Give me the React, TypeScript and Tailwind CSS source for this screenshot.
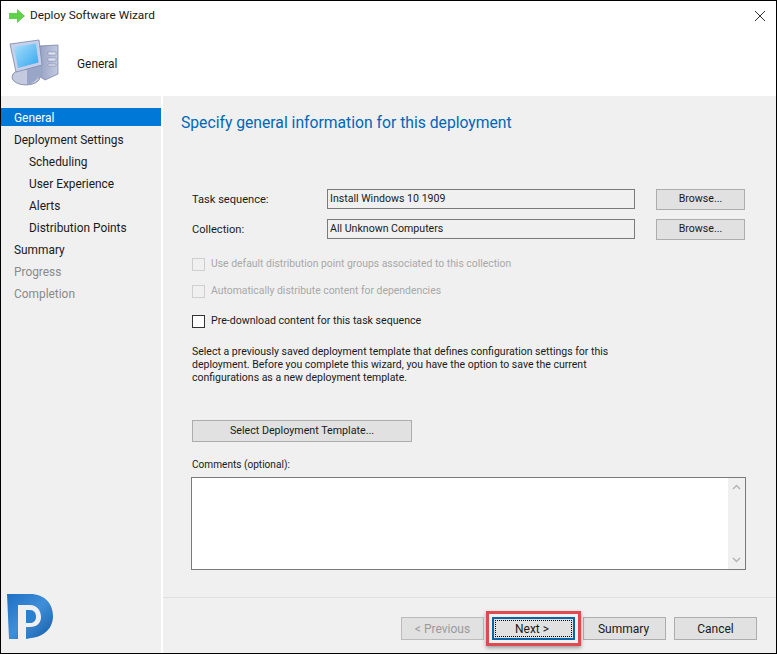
import React from "react";

const font = "font-['Roboto','Noto_Sans',sans-serif]";

function Btn({ children, className = "" }: { children: React.ReactNode; className?: string }) {
  return (
    <div className={`flex items-center justify-center border border-[#adadad] bg-[#e1e1e1] text-[#1a1a1a] ${className}`}>
      {children}
    </div>
  );
}

function Check({ label, disabled, className = "" }: { label: string; disabled?: boolean; className?: string }) {
  return (
    <div className={`flex h-[16px] items-center gap-[6px] ${disabled ? "text-[10.4px] text-[#a8a8a8]" : "text-[10.6px] text-[#1a1a1a]"} ${className}`}>
      <span className={`h-[13px] w-[13px] border ${disabled ? "border-[#cfcfcf] bg-[#f0f0f0]" : "border-[#333] bg-white"}`} />
      <span>{label}</span>
    </div>
  );
}

function Field({ label, value, className = "" }: { label: string; value: string; className?: string }) {
  return (
    <div className={`flex h-[22px] items-center ${className}`}>
      <span className="w-[135px] pt-[2px] text-[11.1px] text-[#1a1a1a]">{label}</span>
      <div className="flex h-[20px] w-[308px] items-center border border-[#7a7a7a] bg-[#f0f0f0] pl-[2px] text-[10.6px] text-[#1a1a1a]">{value}</div>
      <Btn className="ml-[21px] h-[21px] w-[89px] text-[10.6px]">Browse...</Btn>
    </div>
  );
}

function NavItem({ label, sub, active, muted }: { label: string; sub?: boolean; active?: boolean; muted?: boolean }) {
  return (
    <div
      className={`flex h-[18px] items-center pt-[3px] ${sub ? "pl-[28px]" : "pl-[13px]"} ${
        active ? "bg-[#0078d7] text-white" : muted ? "text-[#8a8a8a]" : "text-[#1a1a1a]"
      } mb-[4px] text-[11.9px]`}
    >
      {label}
    </div>
  );
}

function MonitorIcon() {
  return (
    <svg width="50" height="50" viewBox="0 0 50 50">
      <defs>
        <linearGradient id="scr" x1="0" y1="0" x2="1" y2="1">
          <stop offset="0" stopColor="#a8e0fb" />
          <stop offset="1" stopColor="#35a5ee" />
        </linearGradient>
        <linearGradient id="case" x1="0" y1="0" x2="1" y2="0">
          <stop offset="0" stopColor="#8f9cc0" />
          <stop offset="1" stopColor="#c3cae0" />
        </linearGradient>
      </defs>
      <path d="M30 8 L49 7 L49 36 L36 42 L27 36 Z" fill="url(#case)" stroke="#6d7aa0" strokeWidth="0.7" />
      <path d="M39 14h8v3h-8zM39 20h8v3h-8zM39 26h8v2h-8z" fill="#dfe3ef" stroke="#7783a6" strokeWidth="0.5" />
      <ellipse cx="17" cy="39" rx="14" ry="8" fill="#c4cbe0" stroke="#6b7696" strokeWidth="0.7" />
      <path d="M18 28 L33 27 L34 36 L22 46 L18 46 Z" fill="#9aa6c8" />
      <path d="M1 6 L30 2 L33 27 L7 34 Z" fill="#c6d0ea" stroke="#7b88ab" strokeWidth="0.8" />
      <path d="M5 9 L27 5.5 L29.5 24.5 L9 30 Z" fill="url(#scr)" />
    </svg>
  );
}

function Logo() {
  return (
    <svg className="absolute bottom-[12px] left-[4px]" width="50" height="48" viewBox="0 0 50 48">
      <defs>
        <linearGradient id="lg" x1="0" y1="0" x2="1" y2="1">
          <stop offset="0" stopColor="#1f6fc4" />
          <stop offset="0.5" stopColor="#3f8fd8" />
          <stop offset="1" stopColor="#165ca8" />
        </linearGradient>
      </defs>
      <path
        d="M2 1 H25 C40 1 48 11 48 23 C48 36 38 44 26 45 L21 46 V34 H25 C32 34 36 30 36 24 C36 18 32 12 25 12 H13 V46 H4 Z"
        fill="url(#lg)"
      />
      <path d="M21 17 H25 C29 17 31 20 31 24 C31 28 28 30 25 30 H21 Z" fill="#2b7fcc" />
    </svg>
  );
}

export default function App() {
  return (
    <div className={`relative flex h-[654px] w-[777px] flex-col border border-black bg-white ${font}`}>
      <div className="flex h-[29px] items-center pl-[8px] pt-[1px]">
        <svg width="17" height="14" viewBox="0 0 17 14">
          <path d="M0 4 H8 V0 L16 7 L8 14 V10 H0 Z" fill="#5ed04a" />
        </svg>
        <span className="ml-[4px] text-[11.8px] text-[#1a1a1a]">Deploy Software Wizard</span>
        <svg className="ml-auto mr-[10px]" width="12" height="12" viewBox="0 0 12 12">
          <path d="M1 1 L11 11 M11 1 L1 11" stroke="#333" strokeWidth="1" fill="none" />
        </svg>
      </div>

      <div className="flex h-[66px] items-center pl-[8px]">
        <MonitorIcon />
        <span className="ml-[18px] mt-[4px] text-[11.9px] text-[#1a1a1a]">General</span>
      </div>

      <div className="flex min-h-0 flex-1">
        <div className="w-[160px] bg-[#f0f0f0] pt-[12px]">
          <NavItem label="General" active />
          <NavItem label="Deployment Settings" />
          <NavItem label="Scheduling" sub />
          <NavItem label="User Experience" sub />
          <NavItem label="Alerts" sub />
          <NavItem label="Distribution Points" sub />
          <NavItem label="Summary" />
          <NavItem label="Progress" muted />
          <NavItem label="Completion" muted />
        </div>
        <div className="flex flex-1 flex-col border-l-2 border-white bg-[#f0f0f0]">
          <div className="flex-1 pl-[18px]">
            <h1 className="mt-[15px] text-[15.7px] leading-[24px] text-[#0067b8]">Specify general information for this deployment</h1>
            <Field label="Task sequence:" value="Install Windows 10 1909" className="mt-[53px] pl-[11px]" />
            <Field label="Collection:" value="All Unknown Computers" className="mt-[8px] pl-[11px]" />
            <Check label="Use default distribution point groups associated to this collection" disabled className="ml-[11px] mt-[16px]" />
            <Check label="Automatically distribute content for dependencies" disabled className="ml-[11px] mt-[11px]" />
            <Check label="Pre-download content for this task sequence" className="ml-[11px] mt-[14px]" />
            <p className="ml-[11px] mt-[16px] w-[425px] text-[10.5px] leading-[13px] text-[#1a1a1a]">
              Select a previously saved deployment template that defines configuration settings for this deployment. Before you complete this wizard, you have the option to save the current configurations as a new deployment template.
            </p>
            <Btn className="ml-[11px] mt-[35.5px] h-[22px] w-[220px] pt-[2px] text-[10.7px]">Select Deployment Template...</Btn>
            <div className="ml-[11px] mt-[15px] h-[16px] text-[10.1px] leading-[16px] text-[#1a1a1a]">Comments (optional):</div>
            <div className="ml-[10px] mt-[4px] flex h-[93px] w-[555px] justify-end border border-[#7a7a7a] bg-white">
              <div className="flex w-[17px] flex-col items-center justify-between bg-[#f0f0f0] py-[6px]">
                <svg width="9" height="6" viewBox="0 0 9 6"><path d="M1 5 L4.5 1.5 L8 5" stroke="#b5b5b5" strokeWidth="1.5" fill="none" /></svg>
                <svg width="9" height="6" viewBox="0 0 9 6"><path d="M1 1 L4.5 4.5 L8 1" stroke="#b5b5b5" strokeWidth="1.5" fill="none" /></svg>
              </div>
            </div>
          </div>
          <div className="flex h-[56px] items-start justify-end gap-[8px] border-t border-[#e0e0e0] pr-[19px] pt-[19px]">
            <Btn className="h-[23px] w-[83px] !border-[#bcbcbc] bg-[#cdcdcd] text-[12px] !text-[#9a9a9a]">&lt; Previous</Btn>
            <div className="relative">
              <div className="flex h-[23px] w-[83px] items-center justify-center border-2 border-[#0a64a8] bg-[#e1e1e1] text-[12px] text-[#1a1a1a]">
                <div className="flex h-[17px] w-[77px] items-center justify-center border border-dotted border-black pr-[3px]">Next &gt;</div>
              </div>
              <div className="absolute -inset-[6px] border-[3px] border-[#dd4b50] shadow-[0_2px_4px_rgba(0,0,0,0.35)]" />
            </div>
            <Btn className="h-[23px] w-[83px] pr-[2px] text-[12px]">Summary</Btn>
            <Btn className="h-[23px] w-[83px] text-[12px]">Cancel</Btn>
          </div>
        </div>
      </div>
      <Logo />
    </div>
  );
}
